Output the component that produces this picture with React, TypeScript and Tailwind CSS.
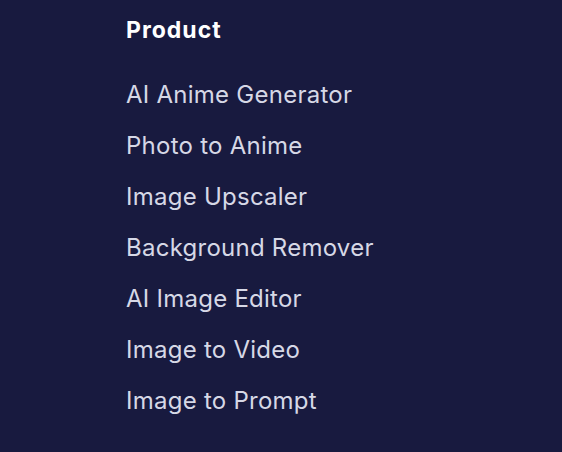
const links = [
  'AI Anime Generator',
  'Photo to Anime',
  'Image Upscaler',
  'Background Remover',
  'AI Image Editor',
  'Image to Video',
  'Image to Prompt',
]

export default function App() {
  return (
    <div className="min-h-[452px] w-full bg-[#181a3f] pl-[126px] pt-[14px] font-['Inter',sans-serif]">
      <h3 className="text-[23px] leading-[32px] font-bold tracking-[1px] text-white">Product</h3>
      <ul className="mt-[33px] flex flex-col gap-[19px]">
        {links.map((label) => (
          <li key={label}>
            <a href="#" className="text-[24px] leading-[32px] tracking-[0.25px] text-[#d6d8e6]">
              {label}
            </a>
          </li>
        ))}
      </ul>
    </div>
  )
}
